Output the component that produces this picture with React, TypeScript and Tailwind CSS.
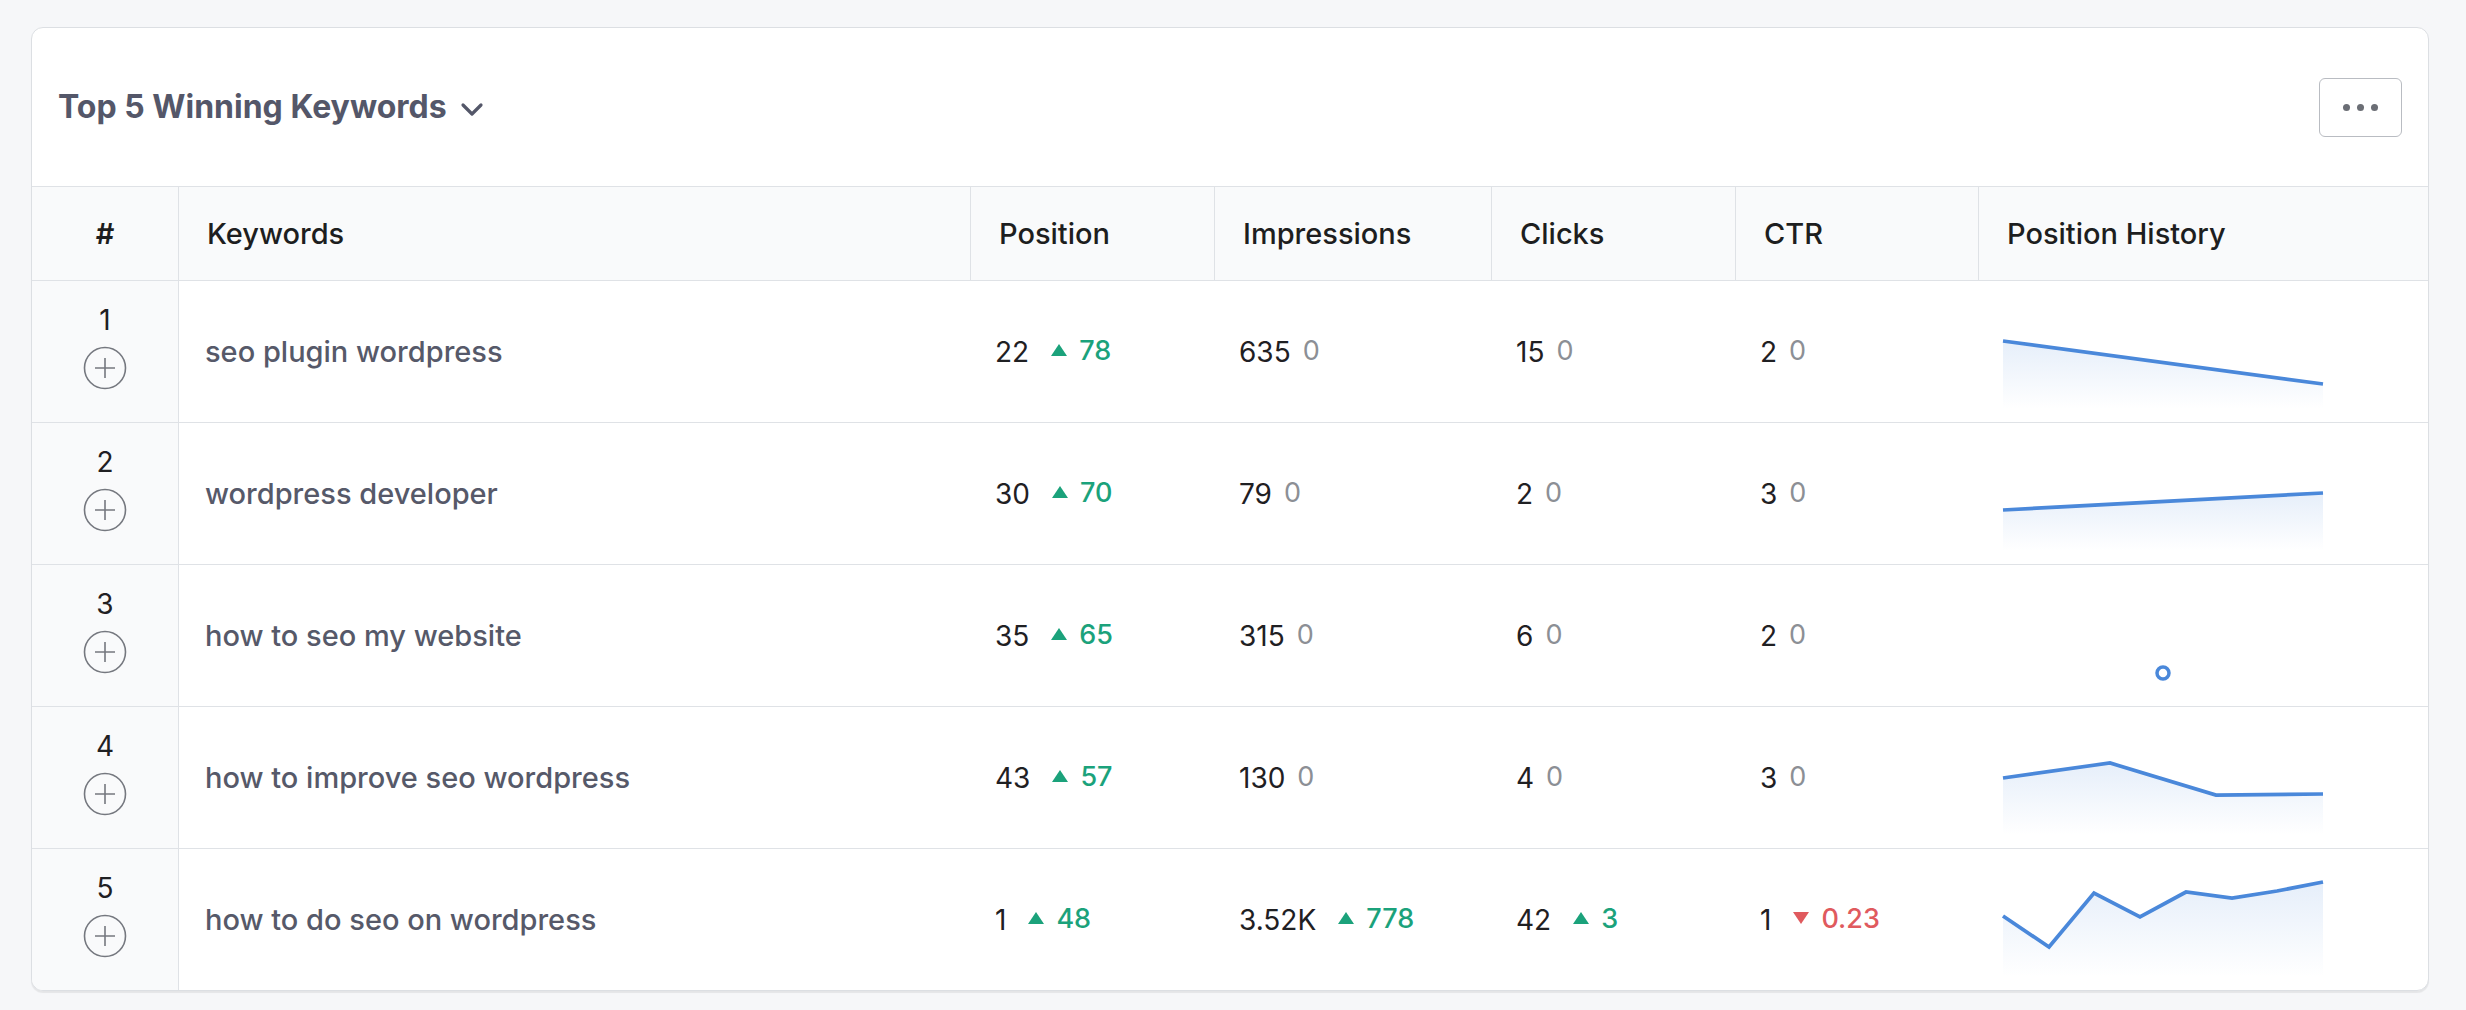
import React from 'react';

type Delta = { value: string; dir?: 'up' | 'down' };
type Metric = { value: string; delta: Delta };

interface KeywordRow {
  rank: number;
  keyword: string;
  position: Metric;
  impressions: Metric;
  clicks: Metric;
  ctr: Metric;
  history: [number, number][];
}

const zero: Delta = { value: '0' };

const rows: KeywordRow[] = [
  {
    rank: 1,
    keyword: 'seo plugin wordpress',
    position: { value: '22', delta: { value: '78', dir: 'up' } },
    impressions: { value: '635', delta: zero },
    clicks: { value: '15', delta: zero },
    ctr: { value: '2', delta: zero },
    history: [
      [0, 60],
      [320, 103],
    ],
  },
  {
    rank: 2,
    keyword: 'wordpress developer',
    position: { value: '30', delta: { value: '70', dir: 'up' } },
    impressions: { value: '79', delta: zero },
    clicks: { value: '2', delta: zero },
    ctr: { value: '3', delta: zero },
    history: [
      [0, 87],
      [320, 70],
    ],
  },
  {
    rank: 3,
    keyword: 'how to seo my website',
    position: { value: '35', delta: { value: '65', dir: 'up' } },
    impressions: { value: '315', delta: zero },
    clicks: { value: '6', delta: zero },
    ctr: { value: '2', delta: zero },
    history: [[160, 108]],
  },
  {
    rank: 4,
    keyword: 'how to improve seo wordpress',
    position: { value: '43', delta: { value: '57', dir: 'up' } },
    impressions: { value: '130', delta: zero },
    clicks: { value: '4', delta: zero },
    ctr: { value: '3', delta: zero },
    history: [
      [0, 71],
      [107, 56],
      [213, 88],
      [320, 87],
    ],
  },
  {
    rank: 5,
    keyword: 'how to do seo on wordpress',
    position: { value: '1', delta: { value: '48', dir: 'up' } },
    impressions: { value: '3.52K', delta: { value: '778', dir: 'up' } },
    clicks: { value: '42', delta: { value: '3', dir: 'up' } },
    ctr: { value: '1', delta: { value: '0.23', dir: 'down' } },
    history: [
      [0, 67],
      [46, 98],
      [91, 44],
      [137, 68],
      [183, 43],
      [229, 49],
      [274, 42],
      [320, 33],
    ],
  },
];

const COLS = 'grid grid-cols-[147px_792px_244px_277px_244px_243px_1fr]';

function Triangle({ dir }: { dir: 'up' | 'down' }) {
  return (
    <svg width="16" height="12" viewBox="0 0 16 12" className="-translate-y-[2px]">
      {dir === 'up' ? <polygon points="8,0 16,12 0,12" fill="currentColor" /> : <polygon points="0,0 16,0 8,12" fill="currentColor" />}
    </svg>
  );
}

function MetricCell({ metric }: { metric: Metric }) {
  const { value, delta } = metric;
  return (
    <div className="flex items-center pl-[24px]">
      <span className="text-[28px] text-[#1f2023]">{value}</span>
      {delta.dir ? (
        <span
          className={
            delta.dir === 'up'
              ? 'ml-[22px] flex items-center text-[27px] font-medium text-[#1ba27b]'
              : 'ml-[22px] flex items-center text-[27px] font-medium text-[#e05a5e]'
          }
        >
          <Triangle dir={delta.dir} />
          <span className="ml-[12px]">{delta.value}</span>
        </span>
      ) : (
        <span className="ml-[12px] text-[27px] text-[#8c8f95]">{delta.value}</span>
      )}
    </div>
  );
}

function PlusCircle() {
  return (
    <svg width="44" height="44" viewBox="0 0 44 44" fill="none" stroke="#75787f" strokeWidth="1.6">
      <circle cx="22" cy="22" r="20.5" />
      <path d="M22 12v20M12 22h20" />
    </svg>
  );
}

function Sparkline({ id, points }: { id: string; points: [number, number][] }) {
  if (points.length === 1) {
    const [x, y] = points[0];
    return (
      <svg width="320" height="141" className="overflow-visible">
        <circle cx={x} cy={y} r="6" fill="#fff" stroke="#4a88da" strokeWidth="3.5" />
      </svg>
    );
  }
  const line = points.map(([x, y]) => `${x},${y}`).join(' ');
  const top = Math.min(...points.map(p => p[1]));
  const area = `0,128 ${line} 320,128`;
  return (
    <svg width="320" height="141" className="overflow-visible">
      <defs>
        <linearGradient id={id} x1="0" y1={top} x2="0" y2="128" gradientUnits="userSpaceOnUse">
          <stop offset="0" stopColor="#4a88da" stopOpacity="0.14" />
          <stop offset="1" stopColor="#4a88da" stopOpacity="0" />
        </linearGradient>
      </defs>
      <polygon points={area} fill={`url(#${id})`} />
      <polyline points={line} fill="none" stroke="#4a88da" strokeWidth="3.75" strokeLinejoin="miter" />
    </svg>
  );
}

export default function App() {
  const headers = ['Keywords', 'Position', 'Impressions', 'Clicks', 'CTR', 'Position History'];

  return (
    <div className="min-h-screen bg-[#f6f7f9] pt-[27px] pl-[31px] pr-[37px] font-[Inter,'Noto_Sans',sans-serif]">
      <section className="overflow-hidden rounded-[12px] border border-[#dcdfe3] bg-white shadow-[0_2px_1px_rgba(0,0,0,0.07)]">
        <div className="flex h-[158px] items-center justify-between pl-[26px] pr-[26px]">
          <div className="flex items-center text-[32px] font-bold text-[#545769]">
            <span>Top 5 Winning Keywords</span>
            <svg width="24" height="16" viewBox="0 0 24 16" fill="none" className="ml-[13px] mt-[4px]">
              <path d="M3 4l9 9 9-9" stroke="#545769" strokeWidth="3.2" strokeLinecap="round" strokeLinejoin="round" />
            </svg>
          </div>
          <button className="flex h-[59px] w-[83px] items-center justify-center gap-[7px] rounded-[6px] border-[1.5px] border-[#b9bcc2] bg-white">
            <span className="h-[7px] w-[7px] rounded-full bg-[#6b6e75]" />
            <span className="h-[7px] w-[7px] rounded-full bg-[#6b6e75]" />
            <span className="h-[7px] w-[7px] rounded-full bg-[#6b6e75]" />
          </button>
        </div>

        <div className={`${COLS} h-[95px] border-y border-[#dfe2e6] bg-[#f9fafb] text-[29px] font-medium text-[#1d1e20]`}>
          <div className="flex items-center justify-center border-r border-[#dfe2e6] font-semibold">#</div>
          {headers.map((h, i) => (
            <div
              key={h}
              className={
                i < headers.length - 1
                  ? 'flex items-center border-r border-[#dfe2e6] pl-[28px]'
                  : 'flex items-center pl-[28px]'
              }
            >
              {h}
            </div>
          ))}
        </div>

        {rows.map((row, idx) => (
          <div
            key={row.rank}
            className={idx < rows.length - 1 ? `${COLS} h-[142px] border-b border-[#dfe2e6]` : `${COLS} h-[141px]`}
          >
            <div className="flex flex-col items-center justify-center gap-[9px] border-r border-[#dfe2e6] bg-[#f9fafb] pb-[10px]">
              <span className="text-[28px] leading-[34px] text-[#1f2023]">{row.rank}</span>
              <PlusCircle />
            </div>
            <div className="flex items-center pl-[26px] text-[29px] font-medium text-[#565969]">{row.keyword}</div>
            <MetricCell metric={row.position} />
            <MetricCell metric={row.impressions} />
            <MetricCell metric={row.clicks} />
            <MetricCell metric={row.ctr} />
            <div className="pl-[24px]">
              <Sparkline id={`spark-${row.rank}`} points={row.history} />
            </div>
          </div>
        ))}
      </section>
    </div>
  );
}
